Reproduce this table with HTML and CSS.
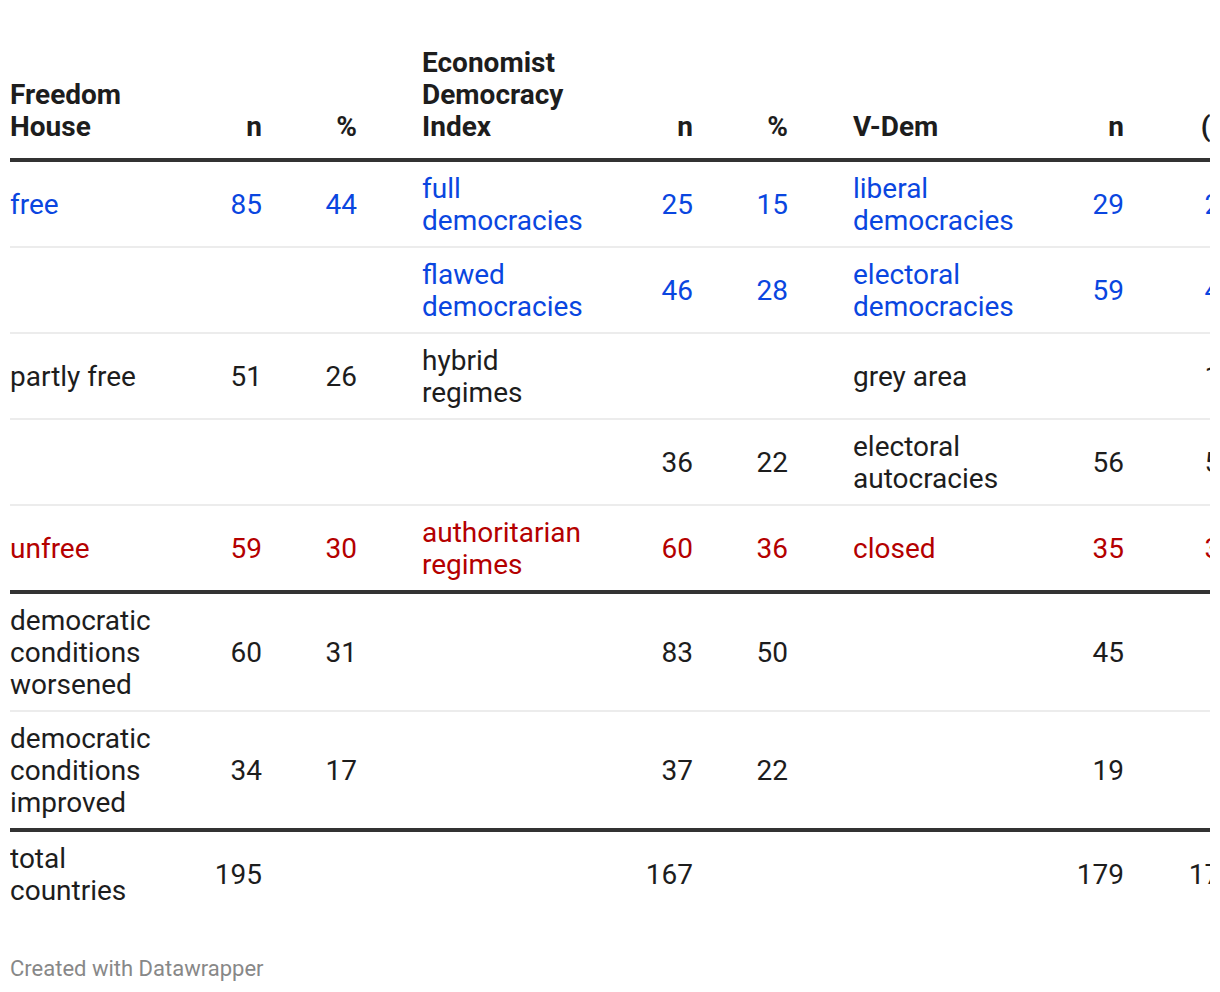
FILE: index.html
```html
<!DOCTYPE html>
<html lang="en">
<head>
<meta charset="utf-8">
<title>Democracy indices</title>
<link rel="stylesheet" href="styles.css">
</head>
<body>
<div class="chart">
  <div class="table-wrap">
    <table class="dw-table">
      <colgroup>
        <col class="c-label1"><col class="c-n1"><col class="c-pct">
        <col class="c-label"><col class="c-n"><col class="c-pct">
        <col class="c-label"><col class="c-n"><col class="c-extra">
      </colgroup>
      <thead>
        <tr>
          <th class="lbl first">Freedom House</th><th class="num">n</th><th class="num">%</th>
          <th class="lbl">Economist Democracy Index</th><th class="num">n</th><th class="num">%</th>
          <th class="lbl">V-Dem</th><th class="num">n</th><th class="num">(n)</th>
        </tr>
      </thead>
      <tbody>
        <tr>
          <td class="lbl first blue">free</td><td class="num blue">85</td><td class="num blue">44</td>
          <td class="lbl blue">full democracies</td><td class="num blue">25</td><td class="num blue">15</td>
          <td class="lbl blue">liberal democracies</td><td class="num blue">29</td><td class="num blue">27</td>
        </tr>
        <tr>
          <td class="lbl first"></td><td class="num"></td><td class="num"></td>
          <td class="lbl blue">flawed democracies</td><td class="num blue">46</td><td class="num blue">28</td>
          <td class="lbl blue">electoral democracies</td><td class="num blue">59</td><td class="num blue">41</td>
        </tr>
        <tr>
          <td class="lbl first">partly free</td><td class="num">51</td><td class="num">26</td>
          <td class="lbl">hybrid regimes</td><td class="num"></td><td class="num"></td>
          <td class="lbl">grey area</td><td class="num"></td><td class="num">12</td>
        </tr>
        <tr>
          <td class="lbl first"></td><td class="num"></td><td class="num"></td>
          <td class="lbl"></td><td class="num">36</td><td class="num">22</td>
          <td class="lbl">electoral autocracies</td><td class="num">56</td><td class="num">55</td>
        </tr>
        <tr class="thick">
          <td class="lbl first red">unfree</td><td class="num red">59</td><td class="num red">30</td>
          <td class="lbl red">authoritarian regimes</td><td class="num red">60</td><td class="num red">36</td>
          <td class="lbl red">closed</td><td class="num red">35</td><td class="num red">33</td>
        </tr>
        <tr>
          <td class="lbl first">democratic conditions worsened</td><td class="num">60</td><td class="num">31</td>
          <td class="lbl"></td><td class="num">83</td><td class="num">50</td>
          <td class="lbl"></td><td class="num">45</td><td class="num"></td>
        </tr>
        <tr class="thick">
          <td class="lbl first">democratic conditions improved</td><td class="num">34</td><td class="num">17</td>
          <td class="lbl"></td><td class="num">37</td><td class="num">22</td>
          <td class="lbl"></td><td class="num">19</td><td class="num"></td>
        </tr>
        <tr class="last">
          <td class="lbl first">total countries</td><td class="num">195</td><td class="num"></td>
          <td class="lbl"></td><td class="num">167</td><td class="num"></td>
          <td class="lbl"></td><td class="num">179</td><td class="num">176</td>
        </tr>
      </tbody>
    </table>
  </div>
  <div class="footer">Created with Datawrapper</div>
</div>
</body>
</html>
```

FILE: styles.css
```css
html, body {
  margin: 0;
  padding: 0;
  background: #ffffff;
}

body {
  font-family: Roboto, "Liberation Sans", Arial, sans-serif;
  color: #1d1d1d;
}

.chart {
  padding: 36px 10px 0 10px;
}

.table-wrap {
  width: 1200px;
  overflow: hidden;
}

.dw-table {
  table-layout: fixed;
  width: 1226px;
  border-collapse: separate;
  border-spacing: 0;
  font-size: 28px;
  line-height: 32px;
}

.c-label1 { width: 160px; }
.c-n1 { width: 92px; }
.c-pct { width: 95px; }
.c-label { width: 243px; }
.c-n { width: 93px; }
.c-extra { width: 112px; }

.dw-table th,
.dw-table td {
  padding: 11px 0 9px 0;
  text-align: left;
}

.dw-table th {
  font-weight: 700;
  vertical-align: bottom;
  padding-bottom: 15px;
  border-bottom: 4px solid #333333;
}

.dw-table td {
  font-weight: 400;
  vertical-align: middle;
  border-bottom: 2px solid #ececec;
}

.dw-table tr.thick td {
  border-bottom: 4px solid #333333;
}

.dw-table tr.last td {
  border-bottom: 0;
}

.dw-table .lbl {
  padding-left: 65px;
}

.dw-table .lbl.first {
  padding-left: 0;
}

.dw-table .num {
  text-align: right;
}

.blue { color: #0a46e0; }
.red { color: #b40000; }

.footer {
  margin-top: 40px;
  font-size: 22px;
  line-height: 26px;
  color: #888888;
}
```
